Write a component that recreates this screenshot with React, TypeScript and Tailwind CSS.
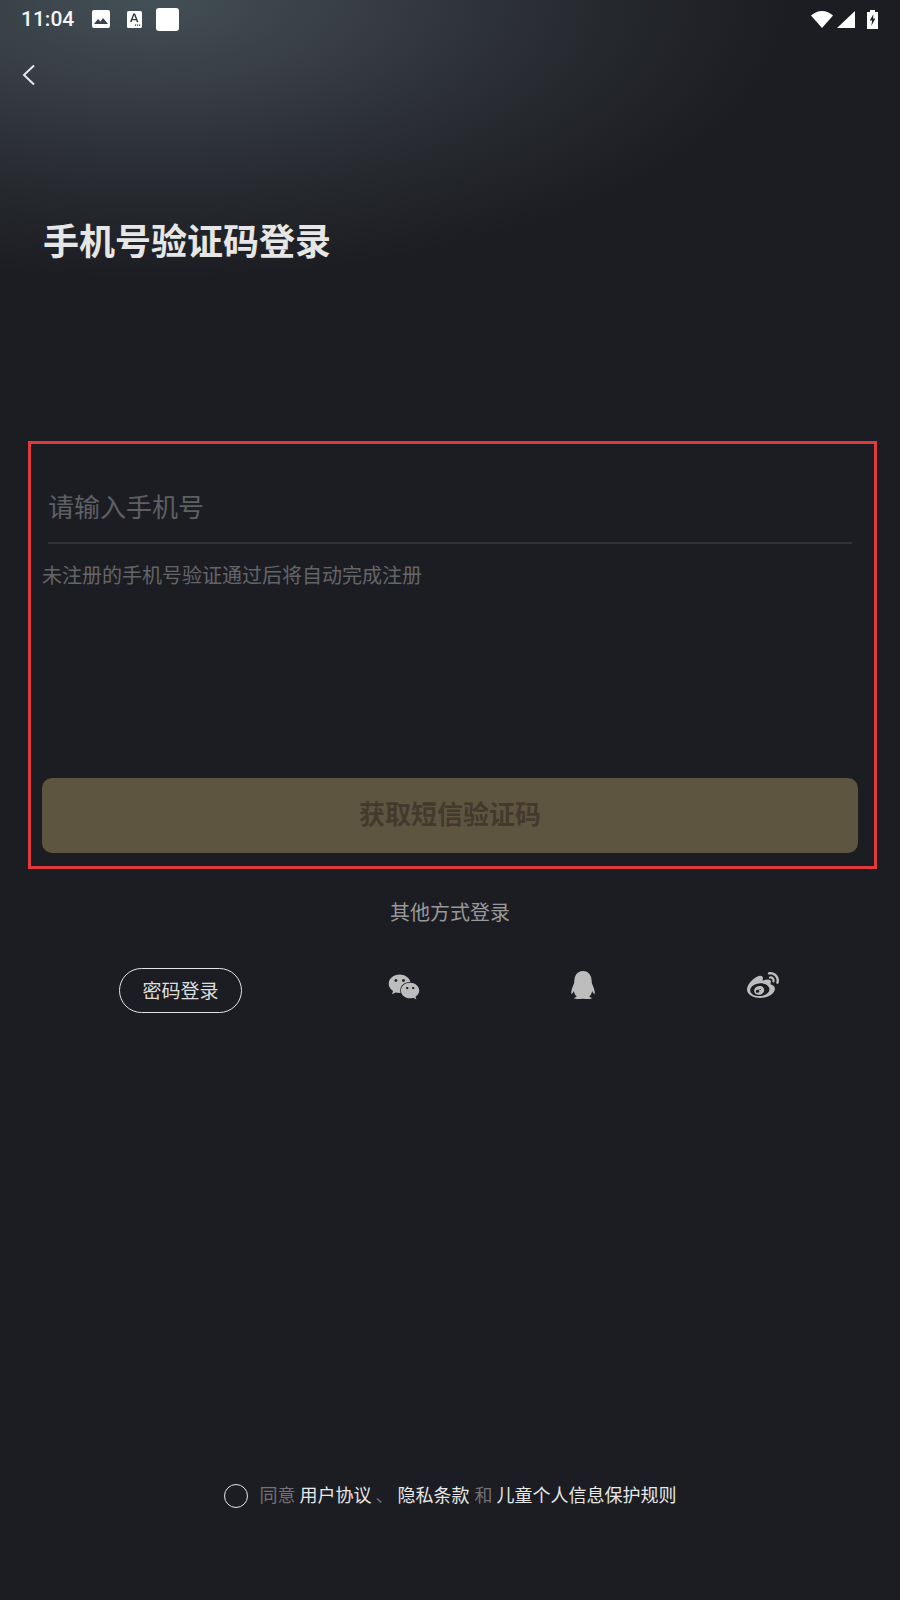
import { FaQq, FaWeibo, FaWeixin } from "react-icons/fa";

const cjk = "font-['Roboto','Noto_Sans_CJK_SC',sans-serif]";

function StatusBar() {
  return (
    <div className="flex h-[38px] items-center justify-between pl-[21px] pr-[22px]">
      <div className="flex items-center">
        <span className="text-[21px] font-medium leading-none text-[#f4f5f5]">11:04</span>
        <svg className="ml-[18px]" width="18" height="18" viewBox="0 0 18 18">
          <rect width="18" height="18" rx="2" fill="#fff" />
          <path d="M2 14l4-5 2.500 2.500L11 8l5 6z" fill="#3a4349" />
        </svg>
        <svg className="ml-[17px]" width="15" height="17" viewBox="0 0 15 17">
          <rect width="15" height="17" rx="1.500" fill="#fff" />
          <path d="M3 11L6.300 2.500h1.800L11.400 11H9.800l-.6-1.700H5.200L4.600 11zM5.700 8h3L7.200 4z" fill="#2f373c" />
          <path d="M8 13.500h1.200v1.200H8zM10 13.500h1.200v1.200H10zM12 13.500h1.200v1.200H12z" fill="#2f373c" />
        </svg>
        <span className="ml-[14px] h-[23px] w-[23px] rounded-[3px] bg-white" />
      </div>
      <div className="flex items-center">
        <svg width="22" height="17" viewBox="0 0 22 17">
          <path d="M0 4.500C3 1.800 7 0 11 0s8 1.800 11 4.500L11 17z" fill="#fff" />
        </svg>
        <svg className="ml-[4px]" width="18" height="17" viewBox="0 0 18 17">
          <path d="M0 17L18 0v17z" fill="#fff" />
        </svg>
        <svg className="ml-[12px]" width="11" height="19" viewBox="0 0 11 19">
          <path d="M3 0h5v2h3v17H0V2h3z" fill="#fff" />
          <path d="M6.500 4L2.800 10.500h2.300L4.300 16 8.300 8.500H6z" fill="#1f2025" />
        </svg>
      </div>
    </div>
  );
}

function OtherLogin() {
  return (
    <div className="flex items-start pl-[119px]">
      <button
        type="button"
        className="h-[45px] w-[123px] rounded-full border-[1.5px] border-[#e4e4e4] pt-[3px] text-[19px] text-[#dedede]"
      >
        密码登录
      </button>
      <FaWeixin className="ml-[146px] mt-[3px] text-[32px] text-[#bdbdbd]" />
      <FaQq className="ml-[149px] mt-[3px] text-[28px] text-[#bdbdbd]" />
      <FaWeibo className="ml-[150px] mt-[2px] text-[32px] text-[#bdbdbd]" />
    </div>
  );
}

export default function App() {
  return (
    <div
      className={`${cjk} flex h-[1600px] w-[900px] flex-col overflow-hidden bg-[#1c1d22] bg-[radial-gradient(ellipse_640px_280px_at_150px_0px,#434f56_0%,#363c42_35%,#26292e_70%,#1c1d22_100%)]`}
    >
      <StatusBar />

      <svg className="ml-[22px] mt-[26px]" width="14" height="22" viewBox="0 0 14 22" fill="none">
        <path d="M12 1.500L2 11l10 9.500" stroke="#e8eaea" strokeWidth="2" />
      </svg>

      <h1 className="ml-[43px] mt-[132px] text-[36px] font-bold leading-[50px] text-[#e6e6e6]">
        手机号验证码登录
      </h1>

      <div className="ml-[28px] mt-[173px] flex h-[428px] w-[849px] flex-col border-[3px] border-[#e03a3c] pl-[11px] pr-[16px]">
        <div className="ml-[6px] mr-[6px] mt-[38px] border-b-2 border-[#323338] pb-[8px] text-[26px] leading-[52px] text-[#5f6063]">
          请输入手机号
        </div>
        <p className="mt-[17px] text-[20px] leading-[30px] text-[#646568]">
          未注册的手机号验证通过后将自动完成注册
        </p>
        <button
          type="button"
          className="mt-auto mb-[13px] h-[75px] w-full rounded-[10px] bg-[#5e5541] text-[26px] font-bold text-[#45392d]"
        >
          获取短信验证码
        </button>
      </div>

      <p className="mt-[29px] text-center text-[20px] leading-[30px] text-[#98999b]">其他方式登录</p>

      <div className="mt-[40px]">
        <OtherLogin />
      </div>

      <div className="mt-[469px] flex items-center justify-center text-[18px] text-[#e8e8e8]">
        <span className="mr-[12px] h-[24px] w-[24px] rounded-full border-[1.5px] border-[#e8e8e8]" />
        <span className="text-[#717275]">同意</span>
        <span className="ml-[4px]">用户协议</span>
        <span className="ml-[4px] text-[#717275]">、</span>
        <span className="ml-[4px]">隐私条款</span>
        <span className="ml-[5px] text-[#717275]">和</span>
        <span className="ml-[4px]">儿童个人信息保护规则</span>
      </div>
    </div>
  );
}
